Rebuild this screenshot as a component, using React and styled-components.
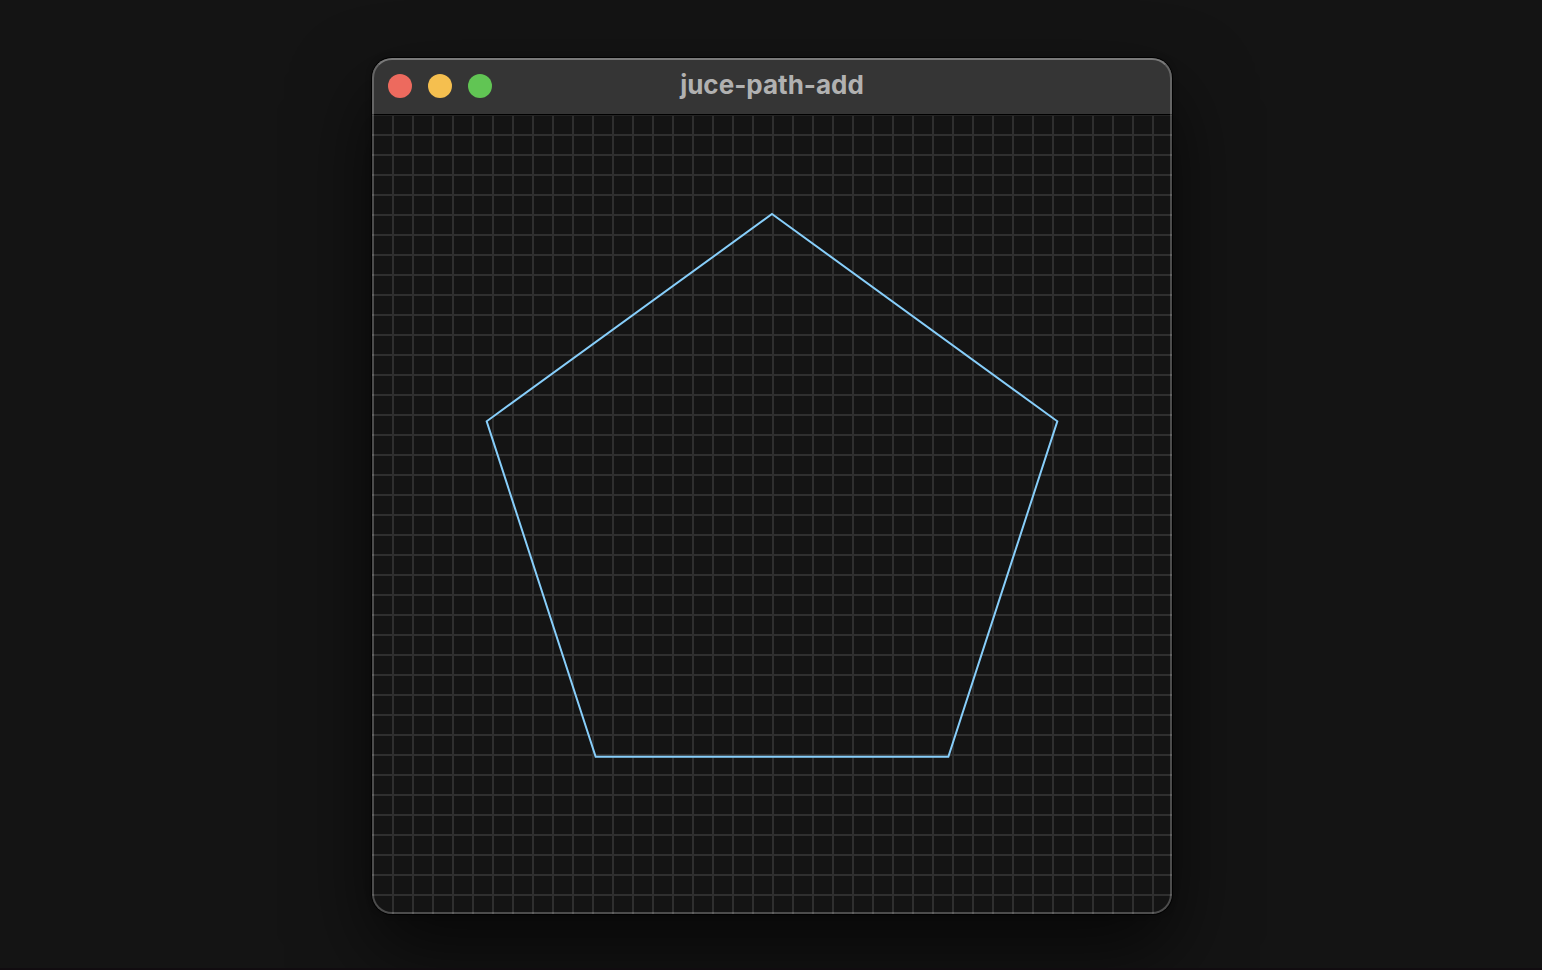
import React from "react";
import styled, { createGlobalStyle } from "styled-components";

const GlobalStyle = createGlobalStyle`
  *, *::before, *::after { box-sizing: border-box; }
  body {
    margin: 0;
    background: #141414;
    font-family: Inter, "Liberation Sans", sans-serif;
  }
`;

const Desktop = styled.main`
  display: flex;
  justify-content: center;
  align-items: flex-start;
  min-height: 100vh;
  padding: 58px 0 54px 2px;
  border-bottom: 2px solid #110c10;
  overflow: hidden;
`;

const Window = styled.section`
  position: relative;
  width: 100%;
  max-width: 800px;
  border-radius: 20px;
  background: #141414;
  box-shadow: 0 0 0 1px #000, 0 36px 80px rgba(0, 0, 0, 0.65), 0 0 6px rgba(0, 0, 0, 0.3);

  /* Light rim drawn over the title bar and the canvas */
  &::after {
    content: "";
    position: absolute;
    inset: 0;
    border: 2px solid rgba(255, 255, 255, 0.24);
    border-top-color: rgba(255, 255, 255, 0.34);
    border-radius: inherit;
    pointer-events: none;
  }
`;

const TitleBar = styled.header`
  display: grid;
  grid-template-columns: 1fr auto 1fr;
  align-items: center;
  height: 56px;
  padding: 0 16px;
  border-radius: 20px 20px 0 0;
  background: #353535;
`;

const Controls = styled.div`
  display: flex;
  gap: 16px;
`;

const ControlButton = styled.button`
  width: 24px;
  height: 24px;
  padding: 0;
  border: 0;
  border-radius: 50%;
  background: ${({ $color }) => $color};
`;

const Title = styled.h1`
  margin: 0;
  padding-bottom: 2px;
  color: #b1b1b1;
  font-size: 26px;
  font-weight: 700;
  line-height: 32px;
`;

const Canvas = styled.div`
  aspect-ratio: 1;
  overflow: hidden;
  border-radius: 0 0 20px 20px;
`;

const Drawing = styled.svg`
  display: block;
  width: 100%;
  height: 100%;
`;

const CONTROLS = [
  { label: "Close", color: "#ed6a5e" },
  { label: "Minimize", color: "#f5bf4f" },
  { label: "Zoom", color: "#61c554" },
];

const SIZE = 800;
const CELL = 20;
const LINES = Array.from({ length: SIZE / CELL - 1 }, (_, i) => (i + 1) * CELL);

function polygonPoints(sides, radius, center) {
  return Array.from({ length: sides }, (_, i) => {
    const angle = (i * 2 * Math.PI) / sides;
    const x = center + radius * Math.sin(angle);
    const y = center - radius * Math.cos(angle);
    return `${x.toFixed(2)},${y.toFixed(2)}`;
  }).join(" ");
}

export default function App() {
  return (
    <>
      <GlobalStyle />
      <Desktop>
        <Window>
          <TitleBar>
            <Controls>
              {CONTROLS.map(({ label, color }) => (
                <ControlButton key={label} type="button" aria-label={label} $color={color} />
              ))}
            </Controls>
            <Title>juce-path-add</Title>
          </TitleBar>
          <Canvas>
            <Drawing viewBox={`0 0 ${SIZE} ${SIZE}`} role="img" aria-label="Pentagon path on a grid">
              <g fill="#2f2f2f">
                {LINES.map((p) => (
                  <rect key={`v${p}`} x={p} y="2" width="2" height={SIZE} />
                ))}
                {LINES.map((p) => (
                  <rect key={`h${p}`} x="0" y={p} width={SIZE} height="2" />
                ))}
              </g>
              <rect width={SIZE} height="1" fill="#000" />
              <rect y="1" width={SIZE} height="1" fill="#222" />
              <polygon
                points={polygonPoints(5, 300, SIZE / 2)}
                fill="none"
                stroke="#87cefa"
                strokeWidth="2"
              />
            </Drawing>
          </Canvas>
        </Window>
      </Desktop>
    </>
  );
}
